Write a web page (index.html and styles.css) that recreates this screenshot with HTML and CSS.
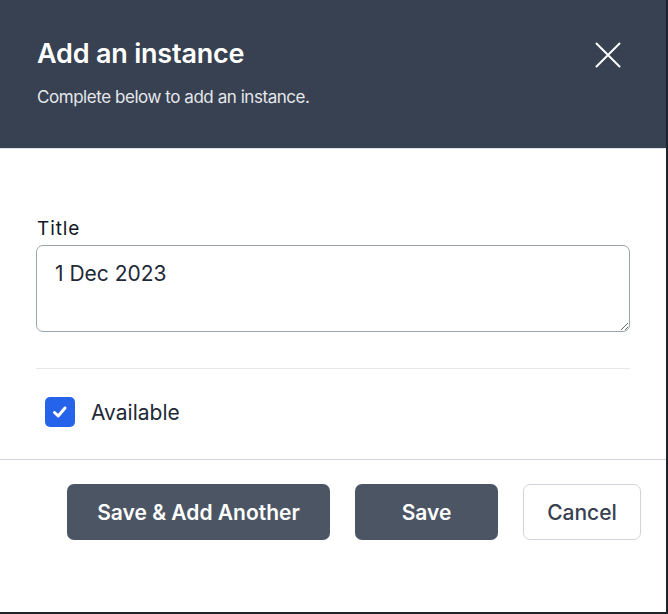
FILE: index.html
```html
<!DOCTYPE html>
<html lang="en">
<head>
<meta charset="utf-8">
<title>Add an instance</title>
<link rel="stylesheet" href="styles.css">
</head>
<body>
<div class="panel">
  <header class="header">
    <div class="header-text">
      <h1 class="title">Add an instance</h1>
      <p class="subtitle">Complete below to add an instance.</p>
    </div>
    <button class="close" aria-label="Close">
      <svg width="26" height="26" viewBox="0 0 26 26" fill="none" stroke="#ffffff" stroke-width="2" stroke-linecap="round"><path d="M1.5 1.5 L24.5 24.5 M24.5 1.5 L1.5 24.5"/></svg>
    </button>
  </header>
  <main class="body">
    <label class="label" for="title">Title</label>
    <textarea id="title" class="textarea">1 Dec 2023</textarea>
    <hr class="divider">
    <div class="check-row">
      <span class="checkbox">
        <svg width="18" height="18" viewBox="0 0 18 18" fill="none" stroke="#ffffff" stroke-width="3" stroke-linecap="round" stroke-linejoin="round"><path d="M3.5 9.5 L7.2 13 L14 5"/></svg>
      </span>
      <span class="check-label">Available</span>
    </div>
  </main>
  <footer class="footer">
    <button class="btn btn-dark btn-wide">Save &amp; Add Another</button>
    <button class="btn btn-dark btn-save">Save</button>
    <button class="btn btn-light">Cancel</button>
  </footer>
</div>
</body>
</html>
```
FILE: styles.css
```css
* { box-sizing: border-box; }
html, body { margin: 0; padding: 0; }
body {
  background: #1e222a;
  width: 668px;
  height: 614px;
  font-family: Inter, "Noto Sans", sans-serif;
  overflow: hidden;
}
.panel {
  width: 666px;
  height: 612px;
  background: #ffffff;
  display: flex;
  flex-direction: column;
}
.header {
  background: #374151;
  height: 149px;
  border-bottom: 1px solid #dfe3ea;
  padding: 36px 45px 0 37px;
  display: flex;
  justify-content: space-between;
  align-items: flex-start;
}
.title {
  margin: 0;
  color: #ffffff;
  font-size: 27px;
  line-height: 36px;
  font-weight: 600;
  letter-spacing: -0.2px;
}
.subtitle {
  margin: 13px 0 0;
  color: #e5e7eb;
  font-size: 17px;
  line-height: 24px;
  letter-spacing: -0.45px;
}
.close {
  background: none;
  border: 0;
  padding: 0;
  margin-top: 6px;
  display: flex;
}
.body {
  padding: 68px 36px 0 36px;
  display: flex;
  flex-direction: column;
  height: 311px;
  border-bottom: 1px solid #d1d5db;
}
.label {
  font-size: 19px;
  line-height: 24px;
  color: #111827;
  padding-left: 1px;
  margin-bottom: 4px;
  letter-spacing: 0.9px;
}
.textarea {
  width: 594px;
  height: 87px;
  border: 1px solid #9ca3af;
  border-radius: 7px;
  padding: 14px 18px 12px;
  font-family: inherit;
  font-size: 21px;
  line-height: 28px;
  color: #1f2937;
  resize: vertical;
}
.divider {
  width: 594px;
  margin: 36px 0 0;
  border: 0;
  border-top: 1px solid #e5e7eb;
}
.check-row {
  display: flex;
  align-items: center;
  margin-top: 28px;
  padding-left: 9px;
}
.checkbox {
  width: 30px;
  height: 30px;
  background: #2563eb;
  border-radius: 5px;
  display: flex;
  align-items: center;
  justify-content: center;
}
.check-label {
  margin-left: 16px;
  font-size: 21px;
  color: #1f2937;
}
.footer {
  display: flex;
  justify-content: flex-end;
  gap: 25px;
  padding: 24px 25px 0 0;
}
.btn {
  height: 56px;
  border-radius: 7px;
  font-family: inherit;
  font-size: 21px;
  font-weight: 600;
  padding: 0;
}
.btn-dark {
  background: #4b5563;
  color: #ffffff;
  border: 0;
}
.btn-wide { width: 263px; }
.btn-save { width: 143px; }
.btn-light {
  width: 118px;
  background: #ffffff;
  color: #374151;
  border: 1px solid #d1d5db;
  font-weight: 500;
}
```
